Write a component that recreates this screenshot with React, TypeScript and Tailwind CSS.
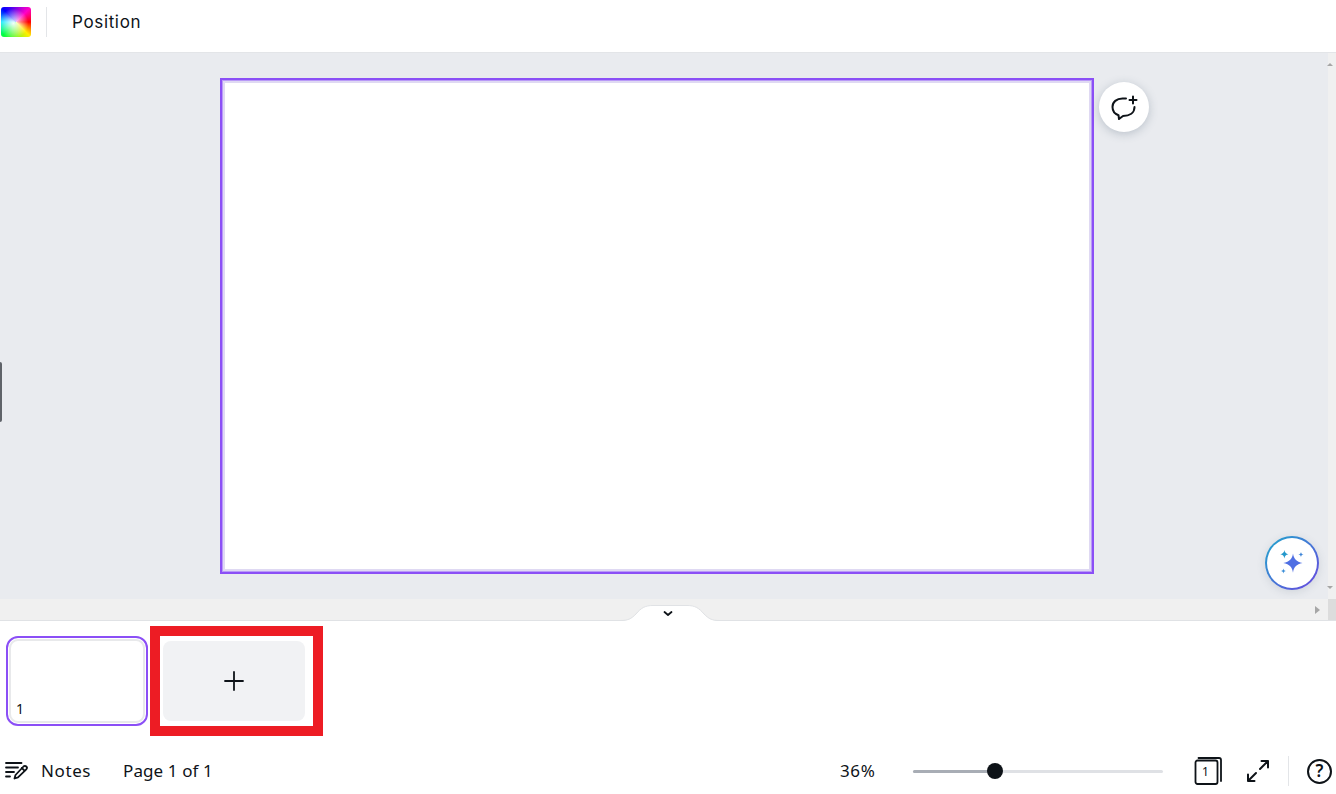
import React from "react";

const ui = { fontFamily: '"Noto Sans", "Open Sans", sans-serif' };
const top = { fontFamily: 'Inter, "Noto Sans", sans-serif' };

function Comment() {
  return (
    <svg width="30" height="30" viewBox="0 0 30 30" fill="none" stroke="#0e1318" strokeWidth="2" strokeLinecap="round" strokeLinejoin="round">
      <path d="M17 6.500H13.500C7.500 6.500 3.500 10 3.500 15c0 4 2.500 7 6 8.200l.5 3.800 4-3c6.500 0 11.500-3 11.500-9" />
      <path d="M24 4.500v7M20.500 8h7" />
    </svg>
  );
}

function Sparkles() {
  return (
    <svg width="28" height="28" viewBox="0 0 28 28">
      <path d="M15 4.500c.8 5.500 3.300 8.200 9.500 9.500-6.200 1.300-8.700 4.100-9.500 9.700-.8-5.600-3.300-8.400-9.700-9.700 6.400-1.300 8.900-4 9.700-9.500z" fill="#4f6fe3" />
      <path d="M6.400 1c.4 2.500 1.500 3.700 4 4.200-2.500.5-3.600 1.700-4 4.300-.4-2.600-1.500-3.800-4.100-4.300C4.900 4.700 6 3.500 6.400 1z" fill="#2398cb" />
      <path d="M23 3c.2 1.500.9 2.200 2.600 2.600-1.700.3-2.400 1-2.600 2.700-.3-1.700-1-2.400-2.700-2.700C22 5.200 22.700 4.500 23 3z" fill="#3f86d8" />
      <path d="M5.500 19.500c.2 1.500.9 2.200 2.500 2.500-1.600.3-2.300 1-2.500 2.600-.3-1.600-1-2.300-2.600-2.600 1.600-.3 2.300-1 2.600-2.500z" fill="#3a8ed8" />
    </svg>
  );
}

function NotesIcon() {
  return (
    <svg width="24" height="20" viewBox="0 0 24 20" fill="none" stroke="#0e1318" strokeWidth="1.800" strokeLinecap="round" strokeLinejoin="round">
      <path d="M1 2h15.500M1 6.500h12M1 11h8M1 15.500h4" />
      <path d="M9.500 17.500l1-3.500 8-8.500c.8-.8 2-.8 2.800 0s.8 2 0 2.800l-8.300 8-3.500 1.200z" />
      <path d="M16.800 7l2.700 2.700" />
    </svg>
  );
}

function PagesIcon() {
  return (
    <svg width="30" height="28" viewBox="0 0 30 28" fill="none" stroke="#0e1318" strokeWidth="1.800" strokeLinecap="round" strokeLinejoin="round">
      <rect x="1.500" y="3.500" width="22" height="23.500" rx="2" />
      <path d="M4.500 1h20.500c1.300 0 2 .7 2 2v21" />
    </svg>
  );
}

function ExpandIcon() {
  return (
    <svg width="24" height="24" viewBox="0 0 24 24" fill="none" stroke="#0e1318" strokeWidth="2" strokeLinecap="round" strokeLinejoin="round">
      <path d="M14 10l8-8M15.500 2H22v6.500" />
      <path d="M10 14l-8 8M2 15.500V22h6.500" />
    </svg>
  );
}

export default function App() {
  return (
    <div className="flex h-[794px] w-[1336px] flex-col overflow-hidden bg-white text-[#0e1318]" style={ui}>
      {/* top bar */}
      <header className="flex h-[53px] shrink-0 items-center border-b border-[#e3e5e8] bg-white pb-[9px] pl-px">
        <div
          className="h-[30px] w-[30px] rounded-[3px]"
          style={{
            background:
              "radial-gradient(circle at 42% 55%, rgba(255,255,255,0.95) 0%, rgba(255,255,255,0) 62%), conic-gradient(from 45deg at 50% 50%, #ff00c8, #ff0000 12.5%, #ffee00 25%, #00ff40 50%, #00e8ff 62.5%, #0000ff 75%, #ff00c8)",
          }}
        />
        <div className="ml-[15px] h-[30px] w-px bg-[#e3e5e8]" />
        <span className="ml-[25px] text-[17px] leading-6 tracking-[0.65px]" style={top}>Position</span>
      </header>

      {/* canvas area */}
      <main className="relative flex h-[546px] shrink-0 bg-[#e9ebef]">
        <div className="flex-1 pl-[220px] pt-[25px]">
          <div className="h-[496px] w-[874px] border-2 border-[#8b4ff6] bg-[#dfd9f3] p-[3px] shadow-[inset_0_0_0_1px_#b99af7]">
            <div className="h-full w-full bg-white" />
          </div>
        </div>
        <div className="relative w-2 bg-[#f0f0f0]">
          <span className="absolute left-[-1px] top-[10px] h-0 w-0 border-x-[3px] border-b-[3px] border-x-transparent border-b-[#a6a6a6]" />
          <span className="absolute bottom-[10px] left-[-1px] h-0 w-0 border-x-[3px] border-t-[3px] border-x-transparent border-t-[#a6a6a6]" />
        </div>

        <button className="absolute left-[1099px] top-[29px] flex h-[50px] w-[50px] items-center justify-center rounded-full bg-white shadow-[0_2px_10px_rgba(64,87,109,0.28)]">
          <Comment />
        </button>

        <div
          className="absolute left-[1265px] top-[483px] flex h-[54px] w-[54px] items-center justify-center rounded-full p-[2px] shadow-[0_2px_8px_rgba(64,87,109,0.15)]"
          style={{ background: "linear-gradient(135deg, #1fa8cc, #6a45e0)" }}
        >
          <div className="flex h-full w-full items-center justify-center rounded-full bg-white">
            <Sparkles />
          </div>
        </div>

        <div className="absolute left-0 top-[309px] h-[60px] w-[2px] rounded-r bg-[#5f6369]" />
      </main>

      {/* scroll strip */}
      <div className="relative flex h-[22px] shrink-0 items-center justify-end border-b border-[#e0e2e5] bg-[#f0f0f0]">
        <span className="mr-[8px] h-0 w-0 border-y-[4px] border-l-[5px] border-y-transparent border-l-[#a6a6a6]" />
        <div className="h-full w-2 bg-[#dcdcdc]" />
        <div className="absolute bottom-[-1px] left-[620px] h-[16px] w-[100px]">
          <svg width="100" height="16" viewBox="0 0 100 16" fill="none">
            <path d="M0 16c8 0 11-2 16-7C21 3 25 .5 33 .5h34c8 0 12 2.500 17 8.500 5 5 8 7 16 7z" fill="#fff" />
            <path d="M0 15.500c8 0 11-1.500 16-6.500C21 3 25 .5 33 .5h34c8 0 12 2.500 17 8.500 5 5 8 6.500 16 6.500" stroke="#e0e2e5" />
            <path d="M44.500 7l3.500 3 3.500-3" stroke="#0e1318" strokeWidth="1.800" strokeLinecap="round" strokeLinejoin="round" />
          </svg>
        </div>
      </div>

      {/* thumbnails */}
      <section className="flex h-[115px] shrink-0 pl-[6px] pt-[5px]">
        <div className="mt-[10px] h-[90px] w-[142px] rounded-[12px] border-2 border-[#8b4ff6] bg-white p-px">
          <div className="flex h-full items-end rounded-[9px] border-2 border-[#e8e9eb] pb-[4px] pl-[5px]">
            <span className="text-[14px] leading-4">1</span>
          </div>
        </div>
        <div className="ml-[2px] h-[110px] w-[173px] border-[10px] border-[#ed1c24] bg-white pl-[3px] pt-[5px]">
          <div className="flex h-[80px] w-[142px] items-center justify-center rounded-[8px] bg-[#f1f2f4]">
            <svg width="20" height="20" viewBox="0 0 20 20" fill="none" stroke="#0e1318" strokeWidth="1.800" strokeLinecap="round">
              <path d="M10 1v18M1 10h18" />
            </svg>
          </div>
        </div>
      </section>

      {/* footer */}
      <footer className="flex flex-1 items-center whitespace-nowrap pl-[5px] pt-[12px] text-[17px] leading-6">
        <NotesIcon />
        <span className="ml-3 w-[50px] tracking-[0.6px]">Notes</span>
        <span className="ml-8 w-[89px] tracking-[0.1px]">Page 1 of 1</span>
        <span className="ml-[628px] w-[73px] tracking-[0.6px]">36%</span>
        <div className="relative h-[3px] w-[250px] rounded-full bg-[#dfe1e5]">
          <div className="h-full w-[82px] rounded-full bg-[#a8adb5]" />
          <div className="absolute left-[74px] top-[-6.500px] h-4 w-4 rounded-full bg-[#0e1318]" />
        </div>
        <div className="relative ml-[31px] flex h-7 w-[30px] items-center justify-center">
          <PagesIcon />
          <span className="absolute left-[8px] top-[7px] text-[12px] leading-4">1</span>
        </div>
        <div className="ml-[22px] flex">
          <ExpandIcon />
        </div>
        <div className="ml-[18px] h-[30px] w-px bg-[#e3e5e8]" />
        <div className="ml-[18px] flex h-[25px] w-[25px] items-center justify-center rounded-full border-2 border-[#0e1318] text-[17px] font-semibold">
          ?
        </div>
      </footer>
    </div>
  );
}
